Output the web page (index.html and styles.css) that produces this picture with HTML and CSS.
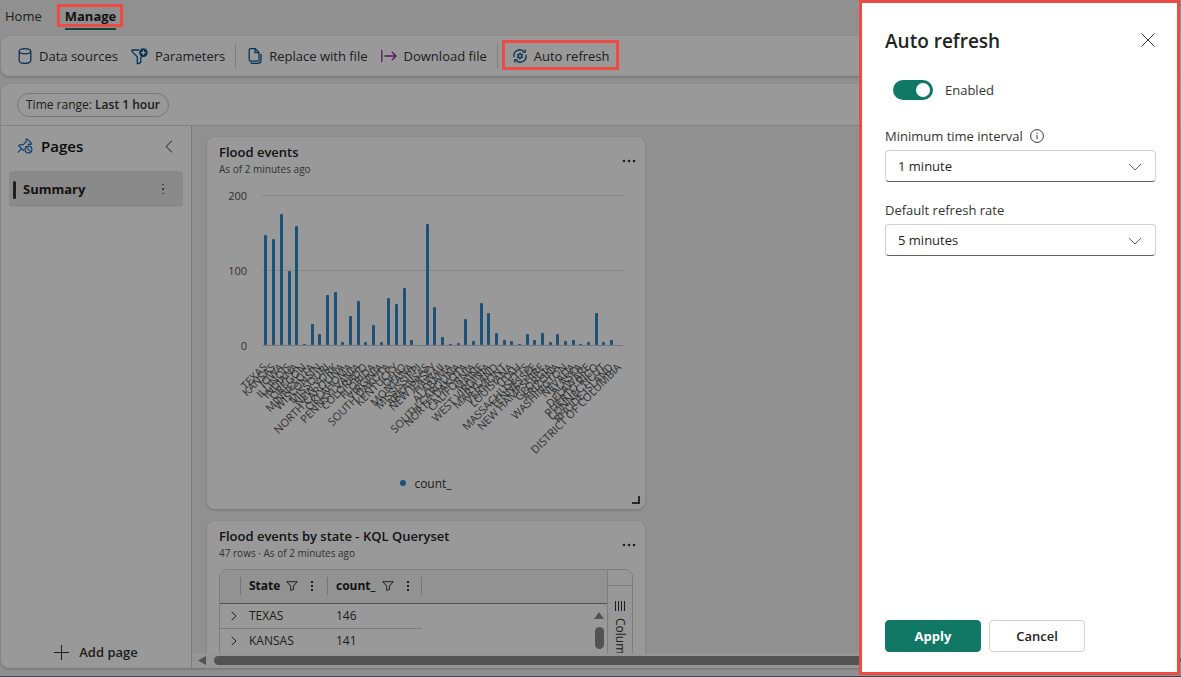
FILE: index.html
```html
<!DOCTYPE html>
<html lang="en">
<head>
    <meta charset="UTF-8">
    <meta name="viewport" content="width=device-width, initial-scale=1.0">
    <title>Dashboard</title>
    <link rel="stylesheet" href="styles.css">
</head>
<body>
    <div class="app">
        <nav class="tabs">
            <a href="#home" class="tab">Home</a>
            <a href="#manage" class="tab tab-active">Manage</a>
        </nav>

        <div class="toolbar">
            <button type="button" class="tool">
                <svg width="14" height="16" viewBox="0 0 14 16" class="icon-blue"><ellipse cx="7" cy="3.3" rx="5.8" ry="2.6"/><path d="M1.2 3.3v9.2c0 1.6 2.6 2.9 5.8 2.9s5.8-1.3 5.8-2.9V3.3"/></svg>
                Data sources
            </button>
            <button type="button" class="tool">
                <svg width="17" height="17" viewBox="0 0 17 17" class="icon-blue"><path d="M8 2H1v1.6l5.3 5.2v6.7H8l1.8-1.5V9.5l1.5-1.2"/><circle cx="12.4" cy="4.6" r="4.3" class="solid"/><path d="M12.4 2.2v4.8M10 4.6h4.8" class="plus"/></svg>
                Parameters
            </button>
            <span class="divider"></span>
            <button type="button" class="tool">
                <svg width="14" height="16" viewBox="0 0 14 16" class="icon-blue"><path d="M2.6.7h4.6L11 4.5v7.3c0 .8-.5 1.4-1.3 1.4H2.6c-.8 0-1.4-.6-1.4-1.4V2.1c0-.8.6-1.4 1.4-1.4z"/><path d="M7 1v3.7h3.8M13 6v6.2c0 1.8-1.2 3.1-3 3.1H4.4c-.8 0-1.4-.4-1.8-1"/></svg>
                Replace with file
            </button>
            <button type="button" class="tool">
                <svg width="16" height="14" viewBox="0 0 16 14" class="icon-purple"><path d="M.8 1v12M3.5 7H15M11 3l4 4-4 4"/></svg>
                Download file
            </button>
            <span class="divider"></span>
            <button type="button" class="tool tool-marked">
                <svg width="14" height="14" viewBox="0 0 14 14" class="icon-blue"><path d="M1 8.2A6 6 0 0 1 10.6 2.200M13 5.800A6 6 0 0 1 3.400 11.800"/><path d="M12.200.4v2.800H9.400M1.800 13.600v-2.800h2.800"/><circle cx="7" cy="7" r="1.800"/><path d="M7 3.600v1.600M7 8.800v1.600M4.100 5.300l1.300.8M8.600 7.900l1.300.8M4.100 8.700l1.300-.8M8.600 6.100l1.300-.8"/></svg>
                Auto refresh
            </button>
        </div>

        <div class="workspace">
            <div class="filters">
                <button type="button" class="pill">Time range: <b>Last 1 hour</b></button>
            </div>
            <div class="content">
                <aside class="sidebar">
                    <div class="sidebar-head">
                        <svg width="16" height="16" viewBox="0 0 17 17" class="icon-pin"><path d="M.8 15.500l4.500-4.500M8 12l-1.200 1.200-5-5c1.500-1.300 3-1.400 4.600-.8L9.800 4 9.600 1.600l.8-.7 5.200 5-.8.8-2.400-.2-.800.900"/><circle cx="12.200" cy="12.200" r="3.600"/><path d="M9.700 9.700l5 5"/></svg>
                        <h2>Pages</h2>
                        <button type="button" class="collapse" aria-label="Collapse pages">
                            <svg width="8" height="13" viewBox="0 0 8 13"><path d="M7 .7L1 6.500 7 12.300"/></svg>
                        </button>
                    </div>
                    <a href="#summary" class="page-item">
                        <span>Summary</span>
                        <svg width="4" height="12" viewBox="0 0 4 12" class="dots dots-light"><path d="M1 1h2v1H1zM1 5h2v2H1zM1 10h2v1H1z"/></svg>
                    </a>
                    <button type="button" class="add-page">
                        <svg width="15" height="15" viewBox="0 0 15 15"><path d="M7.500 0v15M0 7.500h15"/></svg>
                        Add page
                    </button>
                </aside>

                <main class="canvas">
                    <div class="tiles">
                        <section class="tile tile-chart">
                            <header class="tile-head">
                                <div class="tile-title">
                                    <h3>Flood events</h3>
                                    <p>As of 2 minutes ago</p>
                                </div>
                                <button type="button" class="more" aria-label="More options">
                                    <svg width="14" height="4" viewBox="0 0 14 4" class="dots"><circle cx="2" cy="2" r="1.300"/><circle cx="7" cy="2" r="1.300"/><circle cx="12" cy="2" r="1.300"/></svg>
                                </button>
                            </header>
                            <svg class="chart" id="chart" width="414" height="298" viewBox="0 0 414 298"></svg>
                            <div class="legend"><span class="legend-dot"></span>count_</div>
                            <svg width="8" height="8" viewBox="0 0 8 8" class="resize"><path d="M0 7h7V0"/></svg>
                        </section>

                        <section class="tile">
                            <header class="tile-head">
                                <div class="tile-title">
                                    <h3>Flood events by state - KQL Queryset</h3>
                                    <p>47 rows · As of 2 minutes ago</p>
                                </div>
                                <button type="button" class="more" aria-label="More options">
                                    <svg width="14" height="4" viewBox="0 0 14 4" class="dots"><circle cx="2" cy="2" r="1.300"/><circle cx="7" cy="2" r="1.300"/><circle cx="12" cy="2" r="1.300"/></svg>
                                </button>
                            </header>
                            <div class="grid">
                                <div class="grid-body">
                                    <table>
                                        <thead>
                                            <tr>
                                                <th class="col-expand"><div class="th"></div></th>
                                                <th class="col-state">
                                                    <div class="th">State
                                                        <svg width="12" height="10" viewBox="0 0 12 10" class="funnel"><path d="M.8.700h10.400L7.500 5.200v3.200L4.700 9.500V5.200z"/></svg>
                                                        <svg width="4" height="10" viewBox="0 0 4 10" class="dots"><path d="M1 0h2v2H1zM1 4h2v2H1zM1 8h2v2H1z"/></svg>
                                                    </div>
                                                </th>
                                                <th class="col-count">
                                                    <div class="th">count_
                                                        <svg width="12" height="10" viewBox="0 0 12 10" class="funnel"><path d="M.8.700h10.400L7.500 5.200v3.200L4.700 9.500V5.200z"/></svg>
                                                        <svg width="4" height="10" viewBox="0 0 4 10" class="dots"><path d="M1 0h2v2H1zM1 4h2v2H1zM1 8h2v2H1z"/></svg>
                                                    </div>
                                                </th>
                                                <th></th>
                                            </tr>
                                        </thead>
                                        <tbody>
                                            <tr>
                                                <td class="expand"><svg width="6" height="10" viewBox="0 0 6 10"><path d="M.7.800L5 5 .7 9.200"/></svg></td>
                                                <td>TEXAS</td>
                                                <td>146</td>
                                                <td class="blank"></td>
                                            </tr>
                                            <tr>
                                                <td class="expand"><svg width="6" height="10" viewBox="0 0 6 10"><path d="M.7.800L5 5 .7 9.200"/></svg></td>
                                                <td>KANSAS</td>
                                                <td>141</td>
                                                <td class="blank"></td>
                                            </tr>
                                        </tbody>
                                    </table>
                                    <div class="vscroll">
                                        <span class="arrow-up"></span>
                                        <span class="vthumb"></span>
                                    </div>
                                </div>
                                <div class="grid-side">
                                    <button type="button" class="columns-tab">
                                        <svg width="12" height="10" viewBox="0 0 12 10"><path d="M1.500 0v10M4.500 0v10M7.500 0v10M10.500 0v10"/></svg>
                                        <span>Columns</span>
                                    </button>
                                </div>
                            </div>
                        </section>
                    </div>
                    <div class="hscroll">
                        <span class="arrow-left"></span>
                        <span class="hthumb"></span>
                    </div>
                </main>
            </div>
        </div>
    </div>

    <div class="overlay"></div>

    <form class="drawer">
        <div class="drawer-head">
            <h1>Auto refresh</h1>
            <button type="button" class="close" aria-label="Close">
                <svg width="14" height="14" viewBox="0 0 14 14"><path d="M.5.500l13 13M13.500.500L.5 13.500"/></svg>
            </button>
        </div>
        <div class="switch-row">
            <input type="checkbox" id="enabled" class="switch" checked>
            <label for="enabled">Enabled</label>
        </div>
        <div class="field">
            <label for="interval">Minimum time interval
                <svg width="14" height="14" viewBox="0 0 14 14"><circle cx="7" cy="7" r="6.400"/><path d="M7 6v4.200M7 3.600v1.300"/></svg>
            </label>
            <div class="select">
                <select id="interval"><option>1 minute</option></select>
                <svg width="14" height="8" viewBox="0 0 14 8"><path d="M1 1l6 6 6-6"/></svg>
            </div>
        </div>
        <div class="field">
            <label for="rate">Default refresh rate</label>
            <div class="select">
                <select id="rate"><option>5 minutes</option></select>
                <svg width="14" height="8" viewBox="0 0 14 8"><path d="M1 1l6 6 6-6"/></svg>
            </div>
        </div>
        <div class="actions">
            <button type="submit" class="btn btn-primary">Apply</button>
            <button type="button" class="btn">Cancel</button>
        </div>
    </form>
    <script src="chart.js"></script>
</body>
</html>
```
FILE: styles.css
```css
* {
    box-sizing: border-box;
}
body {
    margin: 0;
    font-family: "Open Sans", "Noto Sans", sans-serif;
    font-size: 13px;
    line-height: 20px;
    color: #333;
}
button {
    font: inherit;
    color: inherit;
    background: none;
    border: none;
    padding: 0;
}
a {
    color: inherit;
    text-decoration: none;
}
h1, h2, h3, p {
    margin: 0;
}
svg {
    display: block;
    flex: none;
    fill: none;
    stroke: #333;
}
.app {
    display: flex;
    flex-direction: column;
    height: 100vh;
    padding: 0 0 8px 1px;
    background: #f1f1f1;
    border-bottom: 1px solid #5f7699;
}
.tabs {
    display: flex;
    gap: 23px;
    height: 36px;
    padding: 6px 4px;
}
.tab-active {
    position: relative;
    height: 24px;
    font-weight: 700;
    color: #222;
    border-bottom: 2px solid #117865;
}
.tab-active::after,
.tool-marked::after {
    content: "";
    position: absolute;
    z-index: 2;
    inset: -2px -7px 1px -8px;
    border: 3px solid #ef4b45;
}
.toolbar {
    display: flex;
    align-items: center;
    height: 40px;
    margin-bottom: 8px;
    padding-left: 17px;
    background: #fff;
    border-radius: 8px 0 0 8px;
    box-shadow: 0 1px 3px rgba(0, 0, 0, 0.25);
}
.tool {
    position: relative;
    display: flex;
    align-items: center;
    gap: 7px;
    margin-right: 13px;
}
.tool-marked {
    margin-left: 3px;
}
.tool-marked::after {
    inset: -6px -9px -4px -11px;
}
.divider {
    width: 1px;
    height: 24px;
    margin: 0 12px 0 -3px;
    background: #d1d1d1;
}
.icon-blue {
    stroke: #0f548c;
    stroke-width: 1.3;
}
.icon-blue .solid {
    fill: #0f548c;
    stroke: none;
}
.icon-blue .plus {
    stroke: #fff;
}
.icon-purple {
    stroke: #8b2a9b;
    stroke-width: 1.3;
}
.workspace {
    display: flex;
    flex-direction: column;
    flex: 1;
    min-height: 0;
    background: #fff;
    border-radius: 8px 0 0 8px;
    box-shadow: 0 1px 3px rgba(0, 0, 0, 0.25);
}
.filters {
    height: 42px;
    padding: 9px 16px;
    border-bottom: 1px solid #d8d8d8;
}
.pill {
    display: block;
    height: 24px;
    padding: 0 8px;
    font-size: 12px;
    border: 1px solid #c8c8c8;
    border-radius: 12px;
}
.pill b {
    font-weight: 600;
}
.content {
    display: flex;
    flex: 1;
    min-height: 0;
}
.sidebar {
    display: flex;
    flex-direction: column;
    width: 191px;
    padding: 10px 8px 6px;
    border-right: 1px solid #d0d0d0;
}
.sidebar-head {
    display: flex;
    align-items: center;
    gap: 8px;
    height: 20px;
    padding: 0 10px 0 8px;
    margin-bottom: 15px;
}
.sidebar-head h2 {
    flex: 1;
    font-size: 15px;
    font-weight: 600;
    color: #111;
}
.icon-pin {
    stroke: #0f6cbd;
    stroke-width: 1.2;
}
.page-item {
    display: flex;
    align-items: center;
    justify-content: space-between;
    height: 36px;
    padding: 0 18px 0 4px;
    font-weight: 700;
    color: #222;
    background: #e6e6e6;
    border-radius: 4px;
}
.page-item span::before {
    content: "";
    display: inline-block;
    width: 3px;
    height: 18px;
    margin-right: 7px;
    vertical-align: middle;
    background: #333;
    border-radius: 2px;
}
.dots {
    fill: #333;
    stroke: none;
}
.dots-light {
    fill: #666;
}
.add-page {
    display: flex;
    align-items: center;
    justify-content: center;
    gap: 10px;
    margin-top: auto;
    font-weight: 600;
}
.canvas {
    display: flex;
    flex-direction: column;
    flex: 1;
    min-width: 0;
}
.tiles {
    display: flex;
    flex-direction: column;
    flex: 1;
    align-items: flex-start;
    gap: 12px;
    min-height: 0;
    padding: 11px 15px 0;
    overflow: hidden;
    background: #f1f1f1;
}
.tile {
    position: relative;
    flex: none;
    width: 438px;
    padding: 6px 12px;
    background: #fff;
    border-radius: 8px;
    box-shadow: 0 1px 3px rgba(0, 0, 0, 0.2);
}
.tile-chart {
    height: 372px;
}
.tile-head {
    display: flex;
    align-items: center;
    justify-content: space-between;
    height: 36px;
}
.tile-title {
    padding-bottom: 4px;
}
.tile-title h3 {
    font-size: 13px;
    font-weight: 600;
    color: #222;
}
.tile-title p {
    font-size: 10px;
    line-height: 14px;
    color: #555;
}
.more {
    margin-right: -3px;
}
.chart {
    overflow: visible;
}
.gridline {
    stroke: #e0e0e0;
}
.baseline {
    stroke: #c3c6dd;
}
.bar {
    fill: #3288c8;
    stroke: none;
}
.tick, .state {
    fill: #555;
    stroke: none;
    font-size: 11px;
    text-anchor: end;
}
.legend {
    display: flex;
    align-items: center;
    justify-content: center;
    gap: 8px;
    height: 14px;
    font-size: 12px;
    color: #333;
}
.legend-dot {
    width: 6px;
    height: 6px;
    margin-bottom: 2px;
    background: #3288c8;
    border-radius: 50%;
}
.resize {
    position: absolute;
    right: 5px;
    bottom: 5px;
    stroke: #444;
    stroke-width: 2;
}
.grid {
    display: flex;
    height: 150px;
    margin-top: 6px;
    border: 1px solid #d0d0d0;
    border-radius: 8px;
    overflow: hidden;
}
.grid-body {
    position: relative;
    flex: 1;
}
table {
    width: 100%;
    table-layout: fixed;
    border-collapse: collapse;
    font-size: 12px;
}
th {
    height: 33px;
    padding: 0;
    text-align: left;
    font-weight: 700;
    color: #222;
    background: #f3f3f3;
    border-bottom: 1px solid #888;
}
.th {
    display: flex;
    align-items: center;
    height: 18px;
    padding-left: 8px;
    border-right: 1px solid #c4c4c4;
}
.th .funnel {
    margin: 0 12px 0 6px;
}
.col-expand {
    width: 21px;
}
.col-state {
    width: 87px;
}
.col-count {
    width: 94px;
}
td {
    height: 25px;
    padding: 0 0 0 8px;
    line-height: 16px;
    border-bottom: 1px solid #d0d0d0;
}
td.blank {
    border-bottom: none;
}
td.expand {
    padding-left: 11px;
}
.vscroll {
    position: absolute;
    top: 33px;
    right: 0;
    bottom: 0;
    display: flex;
    flex-direction: column;
    align-items: center;
    gap: 8px;
    width: 16px;
    padding-top: 9px;
}
.arrow-up {
    width: 10px;
    height: 7px;
    background: #8a8a8a;
    clip-path: polygon(50% 0, 100% 100%, 0 100%);
}
.vthumb {
    width: 9px;
    height: 22px;
    background: #8a8a8a;
    border-radius: 5px;
}
.grid-side {
    width: 25px;
    padding-top: 15px;
    background: #fcfcfc;
    border-left: 1px solid #d0d0d0;
}
.columns-tab {
    display: flex;
    flex-direction: column;
    align-items: center;
    gap: 7px;
    width: 100%;
    height: 120px;
    padding-top: 15px;
    font-size: 12px;
    border-top: 1px solid #d0d0d0;
}
.columns-tab span {
    writing-mode: vertical-rl;
}
.hscroll {
    display: flex;
    align-items: center;
    gap: 8px;
    height: 15px;
    padding-left: 6px;
    background: #fafafa;
}
.arrow-left {
    width: 8px;
    height: 9px;
    background: #8a8a8a;
    clip-path: polygon(0 50%, 100% 0, 100% 100%);
}
.hthumb {
    flex: 1;
    height: 9px;
    background: #8a8a8a;
    border-radius: 5px;
}
.overlay {
    position: fixed;
    z-index: 1;
    inset: 0;
    background: rgba(0, 0, 0, 0.4);
}
.drawer {
    position: fixed;
    z-index: 3;
    top: 0;
    right: 1px;
    bottom: 2px;
    display: flex;
    flex-direction: column;
    width: 321px;
    padding: 27px 21px 20px 23px;
    background: #fff;
    border: 3px solid #ef4b45;
}
.drawer-head {
    display: flex;
    align-items: center;
    justify-content: space-between;
    margin-bottom: 28px;
}
.drawer-head h1 {
    font-size: 19px;
    line-height: 22px;
    font-weight: 600;
    color: #242424;
}
.close {
    padding: 0 1px 2px;
}
.switch-row {
    display: flex;
    align-items: center;
    gap: 12px;
    margin-bottom: 26px;
    padding-left: 8px;
}
.switch {
    appearance: none;
    width: 40px;
    height: 20px;
    margin: 0;
    padding: 3px 3px 3px 23px;
    background: #117865;
    border-radius: 10px;
}
.switch::before {
    content: "";
    display: block;
    width: 14px;
    height: 14px;
    background: #fff;
    border-radius: 50%;
}
.field {
    margin-bottom: 18px;
}
.field label {
    display: flex;
    align-items: center;
    gap: 7px;
    margin-bottom: 4px;
}
.select {
    position: relative;
}
.select select {
    appearance: none;
    display: block;
    width: 100%;
    height: 32px;
    padding: 0 12px;
    font: inherit;
    color: #242424;
    background: #fff;
    border: 1px solid #d1d1d1;
    border-bottom-color: #616161;
    border-radius: 4px;
}
.select svg {
    position: absolute;
    top: 13px;
    right: 14px;
    stroke: #616161;
    pointer-events: none;
}
.actions {
    display: flex;
    gap: 8px;
    margin-top: auto;
}
.btn {
    width: 96px;
    height: 32px;
    font-weight: 600;
    color: #242424;
    border: 1px solid #d1d1d1;
    border-radius: 4px;
}
.btn-primary {
    font-weight: 700;
    color: #fff;
    background: #117865;
    border-color: #117865;
}
```
FILE: chart.js
```javascript
const data = [
    ["TEXAS", 146], ["KANSAS", 141], ["IOWA", 174], ["ILLINOIS", 99],
    ["INDIANA", 159], ["OREGON", 1], ["MINNESOTA", 28], ["WISCONSIN", 15],
    ["MISSOURI", 67], ["NEW YORK", 71], ["NORTH CAROLINA", 4], ["OKLAHOMA", 39],
    ["PENNSYLVANIA", 59], ["COLORADO", 4], ["FLORIDA", 27], ["VIRGINIA", 4],
    ["SOUTH DAKOTA", 63], ["KENTUCKY", 55], ["OHIO", 76], ["MONTANA", 7],
    ["MISSISSIPPI", 0], ["ARKANSAS", 161], ["NEW JERSEY", 50], ["HAWAII", 10],
    ["ALABAMA", 1], ["SOUTH CAROLINA", 2], ["NORTH DAKOTA", 35], ["CALIFORNIA", 5],
    ["MAINE", 56], ["WEST VIRGINIA", 42], ["MARYLAND", 16], ["VERMONT", 7],
    ["LOUISIANA", 5], ["UTAH", 1], ["MASSACHUSETTS", 15], ["TENNESSEE", 7],
    ["NEW HAMPSHIRE", 16], ["GEORGIA", 4], ["ARIZONA", 14], ["WASHINGTON", 5],
    ["NEVADA", 7], ["ALASKA", 1], ["DELAWARE", 4], ["PUERTO RICO", 43],
    ["CONNECTICUT", 4], ["RHODE ISLAND", 7], ["DISTRICT OF COLUMBIA", 0]
];

const chart = document.getElementById("chart");
const left = 43;
const right = 404;
const bottom = 166;
const scale = 0.75;

function add(name, attrs, text) {
    const el = document.createElementNS("http://www.w3.org/2000/svg", name);
    for (const key in attrs) {
        el.setAttribute(key, attrs[key]);
    }
    if (text !== undefined) {
        el.textContent = text;
    }
    chart.appendChild(el);
}

// axis
[200, 100, 0].forEach((value) => {
    const y = bottom - value * scale + 0.5;
    add("line", { x1: left, x2: right, y1: y, y2: y, class: value ? "gridline" : "baseline" });
    add("text", { x: 28, y: y + 4, class: "tick" }, value);
});

// bars and state labels
const step = (right - left) / data.length;
data.forEach(([state, count], i) => {
    const x = Math.ceil(left + step * i + 2);
    const height = Math.round(count * scale);
    add("rect", { x: x, y: bottom - height, width: 3, height: height, rx: 1, class: "bar" });
    add("text", { transform: `translate(${x + 4} ${bottom + 23}) rotate(-45)`, class: "state" }, state);
});
```
